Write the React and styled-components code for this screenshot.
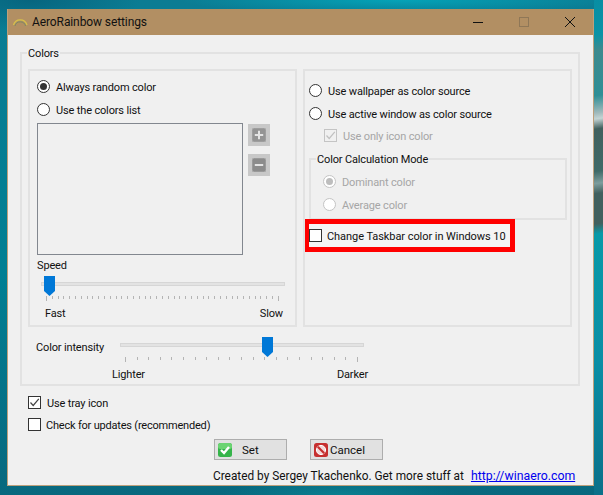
import React from 'react'
import styled, { createGlobalStyle } from 'styled-components'

const GlobalStyle = createGlobalStyle`
  html, body {
    margin: 0;
    padding: 0;
    width: 603px;
    height: 495px;
    overflow: hidden;
  }
  * {
    box-sizing: border-box;
  }
`

const Desktop = styled.div`
  width: 603px;
  height: 495px;
  padding: 9px 9px 0 7px;
  font-family: Roboto, 'Open Sans', sans-serif;
  font-size: 11px;
  letter-spacing: -0.15px;
  color: #111;
  background:
    linear-gradient(
        172deg,
        #088ea3 0,
        #0a93a6 35px,
        #3d8a8e 50px,
        #2f8f96 95px,
        #9fb9bb 112px,
        #c4d4d4 118px,
        #41605e 128px,
        #3f6a68 170px,
        #7d9d9d 182px,
        #41605e 192px,
        #41605e 222px,
        #089aa8 232px,
        #0a8ea5 360px,
        #0a6f88 495px
      )
      right top / 9px 100% no-repeat,
    radial-gradient(ellipse 110px 30px at 30px 0, #07657f, transparent),
    radial-gradient(ellipse 220px 14px at 400px 0, #04a3b8, transparent),
    radial-gradient(ellipse 120px 16px at 340px 495px, #0a7f90, transparent),
    linear-gradient(180deg, #0b7c93 0%, #007f93 55%, #08687e 100%);
`

const Window = styled.div`
  width: 587px;
  height: 477px;
  background: #f0f0f0;
  border: 1px solid #bda07c;
  border-top: 0;
`

const TitleBar = styled.div`
  height: 26px;
  background: #b28f63;
  display: flex;
  align-items: center;
  padding-left: 4px;
`

const TitleText = styled.span`
  font-size: 12px;
  letter-spacing: -0.1px;
  margin-left: 4px;
  flex: 1;
`

const WindowButton = styled.span`
  width: 46px;
  height: 26px;
  display: flex;
  align-items: center;
  justify-content: center;
`

const Content = styled.div`
  padding: 10px 0 0 12px;
`

const Group = styled.fieldset`
  margin: 0;
  min-width: 0;
  padding: ${({ $padding }) => $padding || '0'};
  border: 2px solid #e2e2e2;
  width: ${({ $width }) => $width};
  height: ${({ $height }) => $height};
`

const Legend = styled.legend`
  padding: 0 1px;
  margin-left: ${({ $offset }) => $offset};
  height: 16px;
  line-height: 18px;
`

const Panels = styled.div`
  display: flex;
  gap: 6px;
`

const Panel = styled.div`
  width: 269px;
  height: 258px;
  border: 2px solid #e2e2e2;
  padding: ${({ $padding }) => $padding};
`

const OptionRow = styled.label`
  display: flex;
  align-items: center;
  gap: ${({ $gap }) => $gap || '6px'};
  height: ${({ $height }) => $height || '23px'};
  margin-left: ${({ $indent }) => $indent || '0'};
  color: ${({ $disabled }) => ($disabled ? '#a6a6a6' : '#111')};
  letter-spacing: ${({ $spacing }) => $spacing || 'inherit'};
  white-space: nowrap;
`

const OptionText = styled.span`
  padding-top: 2px;
`

const RadioMark = styled.span`
  width: 13px;
  height: 13px;
  flex: none;
  border-radius: 50%;
  background: #fff;
  border: 1px solid ${({ $disabled }) => ($disabled ? '#c4c4c4' : '#333')};
  display: flex;
  align-items: center;
  justify-content: center;

  &::after {
    content: '';
    display: ${({ $checked }) => ($checked ? 'block' : 'none')};
    width: 7px;
    height: 7px;
    border-radius: 50%;
    background: ${({ $disabled }) => ($disabled ? '#bdbdbd' : '#333')};
  }
`

const CheckMark = styled.span`
  width: 13px;
  height: 13px;
  flex: none;
  background: ${({ $disabled }) => ($disabled ? 'transparent' : '#fff')};
  border: 1px solid ${({ $disabled }) => ($disabled ? '#c4c4c4' : '#333')};
  display: flex;
  align-items: center;
  justify-content: center;
`

const ListRow = styled.div`
  display: flex;
  gap: 5px;
  margin-top: 2px;
`

const ColorList = styled.div`
  width: 206px;
  height: 132px;
  border: 1px solid #82878f;
`

const ListButtons = styled.div`
  display: flex;
  flex-direction: column;
  gap: 8px;
  padding-top: 1px;
`

const SquareButton = styled.span`
  width: 22px;
  height: 22px;
  background: #c8c8c8;
  display: flex;
  align-items: center;
  justify-content: center;
`

const SpeedLabel = styled.div`
  margin: 3px 0 2px;
  line-height: 16px;
`

const Slider = styled.div`
  position: relative;
  width: 244px;
  height: 29px;
  padding-top: 6px;
`

const Track = styled.div`
  height: 4px;
  background: #e3e3e3;
  border: 1px solid #d6d6d6;
`

const Thumb = styled.svg`
  position: absolute;
  top: 0;
  left: ${({ $left }) => $left};
`

const Ticks = styled.div`
  display: flex;
  justify-content: space-between;
  margin: 0 6px 0 5px;
  padding-top: 10px;
`

const Tick = styled.span`
  width: 1px;
  height: ${({ $long }) => ($long ? '5px' : '3px')};
  background: #b4b4b4;
`

const SliderEnds = styled.div`
  display: flex;
  justify-content: space-between;
  padding-top: 1px;
  line-height: 16px;
  margin: ${({ $margin }) => $margin};
`

const SpeedBlock = styled.div`
  width: 244px;
  margin-left: 4px;
`

const IntensityRow = styled.div`
  display: flex;
  padding: 10px 0 0 8px;
`

const IntensityLabel = styled.div`
  width: 84px;
  line-height: 16px;
  padding-top: 3px;
`

const IntensityBlock = styled.div`
  width: 244px;
`

const RightOptions = styled.div`
  margin-bottom: 5px;
`

const Highlight = styled.div`
  width: 210px;
  height: 33px;
  margin: -1px 0 0 -4px;
  position: relative;
  border: solid #ff0000;
  border-width: 5px 5px 5px 4px;
  background: #f4f4f4;
  display: flex;
  align-items: center;
`

const BottomOptions = styled.div`
  padding: 0 0 0 8px;
  margin-top: 5px;
`

const ButtonRow = styled.div`
  display: flex;
  gap: 23px;
  padding-left: 194px;
  margin-top: 4px;
`

const ActionButton = styled.button`
  width: 73px;
  height: 21px;
  padding: 0 0 0 3px;
  background: #e1e1e1;
  border: 1px solid #adadad;
  font: inherit;
  font-size: 11.5px;
  color: #111;
  display: flex;
  align-items: center;
`

const ButtonLabel = styled.span`
  margin-left: ${({ $gap }) => $gap};
`

const Footer = styled.div`
  display: flex;
  padding: 8px 0 0 193px;
  font-size: 11.85px;
  letter-spacing: 0;
  white-space: nowrap;
  line-height: 16px;
`

const WebLink = styled.a`
  color: #0000ee;
  font-size: 12.3px;
  margin-left: 7px;
  text-decoration: underline;
`

const CheckGlyph = ({ color = '#444' }) => (
  <svg width="11" height="11" viewBox="0 0 11 11">
    <path d="M1.5 5.5 L4.2 8.5 L9.8 1.8" fill="none" stroke={color} strokeWidth="1.2" />
  </svg>
)

const RainbowIcon = () => (
  <svg width="16" height="16" viewBox="0 0 16 16">
    <path d="M1.5 11 A7 7 0 0 1 15 11" fill="none" stroke="#d8c24a" strokeWidth="1.2" />
    <path d="M3 12 A5.4 5.4 0 0 1 13.5 12" fill="none" stroke="#7a8a62" strokeWidth="1" />
  </svg>
)

const PlusIcon = () => (
  <svg width="14" height="14" viewBox="0 0 14 14">
    <rect x="0" y="0" width="14" height="14" rx="2.5" fill="#949494" stroke="#a8a8a8" />
    <path d="M7 2.8 V11.2 M2.8 7 H11.2" stroke="#e4e4e4" strokeWidth="2" />
  </svg>
)

const MinusIcon = () => (
  <svg width="14" height="14" viewBox="0 0 14 14">
    <rect x="0" y="0" width="14" height="14" rx="2.5" fill="#8c8c8c" stroke="#a8a8a8" />
    <path d="M2.8 7 H11.2" stroke="#e4e4e4" strokeWidth="2" />
  </svg>
)

const SliderThumb = ({ left }) => (
  <Thumb $left={left} width="11" height="20" viewBox="0 0 11 20">
    <path d="M0 0 H11 V15 L5.5 20 L0 15 Z" fill="#0078d7" />
  </Thumb>
)

const OkIcon = () => (
  <svg width="14" height="14" viewBox="0 0 14 14">
    <rect x="0" y="0" width="14" height="14" rx="2.5" fill="#35b44a" />
    <rect x="0" y="0" width="14" height="6" rx="2.5" fill="#6bd472" />
    <path d="M3 7 L6 10 L11 4" fill="none" stroke="#fff" strokeWidth="2.4" />
  </svg>
)

const CancelIcon = () => (
  <svg width="14" height="14" viewBox="0 0 14 14">
    <rect x="0" y="0" width="14" height="14" rx="2.5" fill="#c62f2f" />
    <circle cx="7" cy="7" r="4.6" fill="#f3d9d9" stroke="#fff" strokeWidth="1" />
    <path d="M3.8 3.8 L10.2 10.2" stroke="#c62f2f" strokeWidth="2.2" />
  </svg>
)

const speedTicks = Array.from({ length: 41 }, (_, i) => i)
const intensityTicks = Array.from({ length: 21 }, (_, i) => i)

const App = () => (
  <Desktop>
    <GlobalStyle />
    <Window>
      <TitleBar>
        <RainbowIcon />
        <TitleText>AeroRainbow settings</TitleText>
        <WindowButton>
          <svg width="10" height="10" viewBox="0 0 10 10">
            <path d="M0 5.5 H10" stroke="#111" strokeWidth="1" />
          </svg>
        </WindowButton>
        <WindowButton>
          <svg width="10" height="10" viewBox="0 0 10 10">
            <rect x="0.5" y="0.5" width="9" height="9" fill="none" stroke="#8f7757" />
          </svg>
        </WindowButton>
        <WindowButton>
          <svg width="10" height="10" viewBox="0 0 10 10">
            <path d="M0 0 L10 10 M10 0 L0 10" stroke="#111" strokeWidth="1" />
          </svg>
        </WindowButton>
      </TitleBar>
      <Content>
        <Group $width="560px" $height="341px" $padding="8px 0 0 6px">
          <Legend $offset="-1px">Colors</Legend>
          <Panels>
            <Panel $padding="4px 0 0 7px">
              <OptionRow>
                <RadioMark $checked />
                <OptionText>Always random color</OptionText>
              </OptionRow>
              <OptionRow>
                <RadioMark />
                <OptionText>Use the colors list</OptionText>
              </OptionRow>
              <ListRow>
                <ColorList />
                <ListButtons>
                  <SquareButton><PlusIcon /></SquareButton>
                  <SquareButton><MinusIcon /></SquareButton>
                </ListButtons>
              </ListRow>
              <SpeedLabel>Speed</SpeedLabel>
              <SpeedBlock>
                <Slider>
                  <Track />
                  <SliderThumb left="3px" />
                  <Ticks>
                    {speedTicks.map((i) => <Tick key={i} $long={i === 0 || i === 40} />)}
                  </Ticks>
                </Slider>
                <SliderEnds $margin="0 2px 0 4px">
                  <span>Fast</span>
                  <span>Slow</span>
                </SliderEnds>
              </SpeedBlock>
            </Panel>
            <Panel $padding="8px 0 0 4px">
              <RightOptions>
                <OptionRow>
                  <RadioMark />
                  <OptionText>Use wallpaper as color source</OptionText>
                </OptionRow>
                <OptionRow>
                  <RadioMark />
                  <OptionText>Use active window as color source</OptionText>
                </OptionRow>
                <OptionRow $disabled $indent="15px" $height="21px">
                  <CheckMark $disabled><CheckGlyph color="#c0c0c0" /></CheckMark>
                  <OptionText>Use only icon color</OptionText>
                </OptionRow>
              </RightOptions>
              <Group $width="258px" $height="69px" $padding="3px 0 0 12px">
                <Legend $offset="-7px">Color Calculation Mode</Legend>
                <OptionRow $disabled>
                  <RadioMark $disabled $checked />
                  <OptionText>Dominant color</OptionText>
                </OptionRow>
                <OptionRow $disabled>
                  <RadioMark $disabled />
                  <OptionText>Average color</OptionText>
                </OptionRow>
              </Group>
              <Highlight>
                <OptionRow $gap="5px" $spacing="-0.06px">
                  <CheckMark />
                  <OptionText>Change Taskbar color in Windows 10</OptionText>
                </OptionRow>
              </Highlight>
            </Panel>
          </Panels>
          <IntensityRow>
            <IntensityLabel>Color intensity</IntensityLabel>
            <IntensityBlock>
              <Slider>
                <Track />
                <SliderThumb left="142px" />
                <Ticks>
                  {intensityTicks.map((i) => <Tick key={i} $long={i === 0 || i === 20} />)}
                </Ticks>
              </Slider>
              <SliderEnds $margin="0 -4px 0 -8px">
                <span>Lighter</span>
                <span>Darker</span>
              </SliderEnds>
            </IntensityBlock>
          </IntensityRow>
        </Group>
        <BottomOptions>
          <OptionRow $height="22px">
            <CheckMark><CheckGlyph /></CheckMark>
            <OptionText>Use tray icon</OptionText>
          </OptionRow>
          <OptionRow $height="22px" $gap="5px" $spacing="-0.2px">
            <CheckMark />
            <OptionText>Check for updates (recommended)</OptionText>
          </OptionRow>
        </BottomOptions>
        <ButtonRow>
          <ActionButton>
            <OkIcon />
            <ButtonLabel $gap="10px">Set</ButtonLabel>
          </ActionButton>
          <ActionButton>
            <CancelIcon />
            <ButtonLabel $gap="2px">Cancel</ButtonLabel>
          </ActionButton>
        </ButtonRow>
        <Footer>
          Created by Sergey Tkachenko. Get more stuff at
          <WebLink href="#">http://winaero.com</WebLink>
        </Footer>
      </Content>
    </Window>
  </Desktop>
)

export default App
